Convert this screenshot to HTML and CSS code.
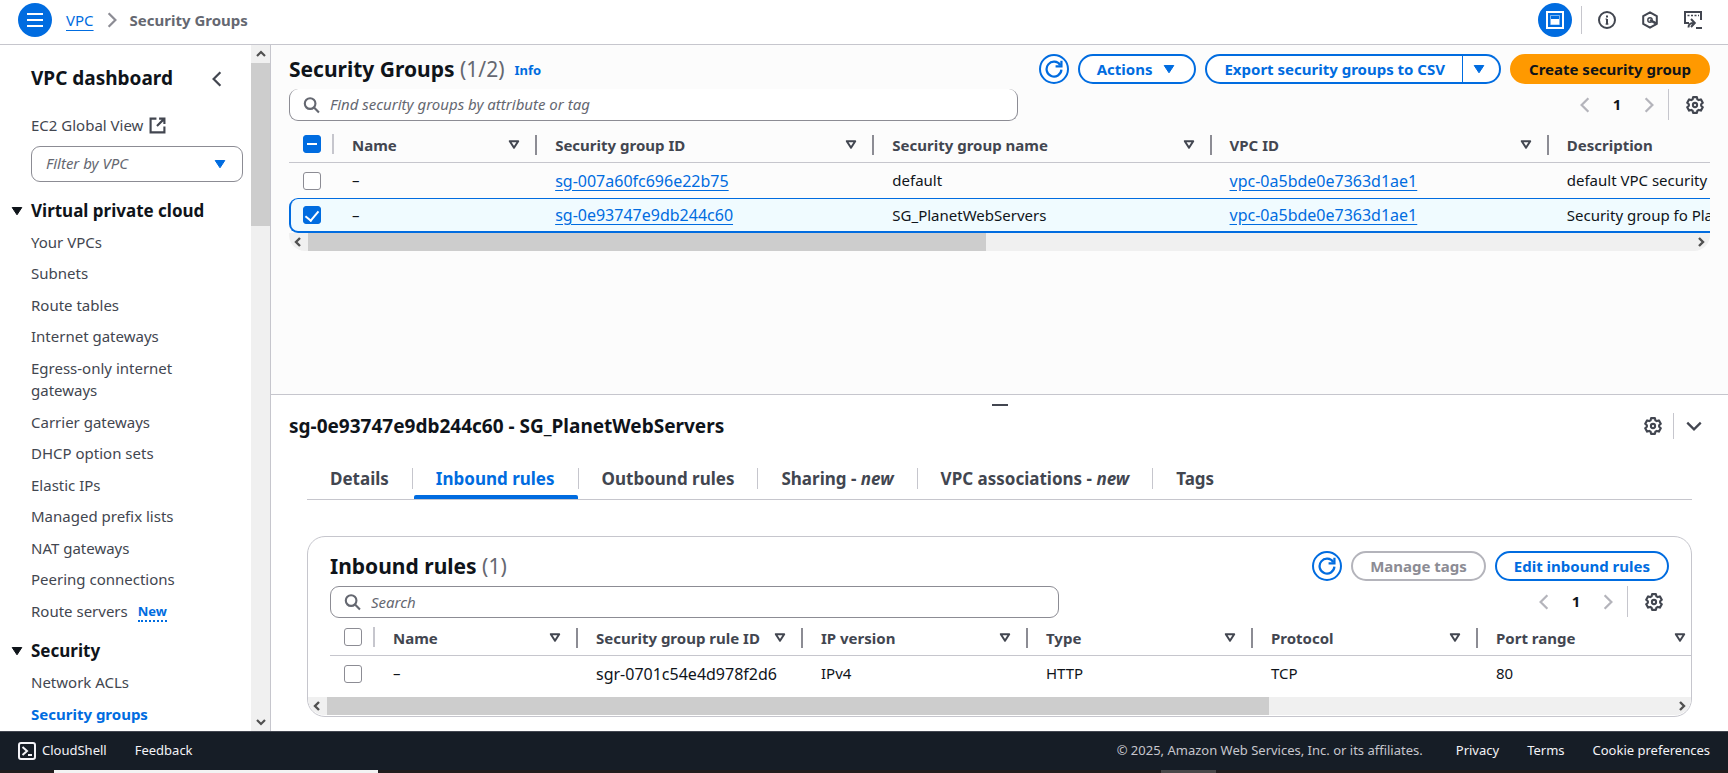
FILE: index.html
```html
<!DOCTYPE html>
<html lang="en">
<head>
<meta charset="utf-8">
<title>Security Groups | VPC Console</title>
<link rel="stylesheet" href="styles.css">
</head>
<body>
<svg class="sprite" aria-hidden="true">
  <symbol id="gear" viewBox="0 0 16 16"><path d="M6.3 1H9.7L10.1 2.9 11.37 3.63 13.21 3.03 14.91 5.97 13.47 7.27V8.73L14.91 10.03 13.21 12.97 11.37 12.37 10.1 13.1 9.7 15H6.3L5.9 13.1 4.63 12.37 2.79 12.97 1.09 10.03 2.53 8.73V7.27L1.09 5.97 2.79 3.03 4.63 3.63 5.9 2.9Z" fill="none" stroke="currentColor" stroke-width="1.9" stroke-linejoin="round"/><circle cx="8" cy="8" r="1.9" fill="none" stroke="currentColor" stroke-width="1.8"/></symbol>
  <symbol id="search" viewBox="0 0 16 16"><circle cx="6.7" cy="6.7" r="5" fill="none" stroke="currentColor" stroke-width="2"/><path d="M10.4 10.4 15 15" fill="none" stroke="currentColor" stroke-width="2"/></symbol>
  <symbol id="refresh" viewBox="0 0 16 16"><path d="M14.6 8.6A6.6 6.6 0 1 1 13.6 4.6" fill="none" stroke="currentColor" stroke-width="2"/><path d="M14.6 .6V5.6H9.4" fill="none" stroke="currentColor" stroke-width="2"/></symbol>
  <symbol id="left" viewBox="0 0 16 16"><path d="M11 2 5 8l6 6" fill="none" stroke="currentColor" stroke-width="2"/></symbol>
  <symbol id="right" viewBox="0 0 16 16"><path d="m5 2 6 6-6 6" fill="none" stroke="currentColor" stroke-width="2"/></symbol>
  <symbol id="down" viewBox="0 0 16 16"><path d="m2 5 6 6 6-6" fill="none" stroke="currentColor" stroke-width="2"/></symbol>
  <symbol id="caret" viewBox="0 0 16 16"><path d="M3.2 4.5h9.6L8 11.8Z" fill="currentColor" stroke="currentColor" stroke-linejoin="round"/></symbol>
  <symbol id="sort" viewBox="0 0 12 12"><path d="M1.8 2.2h8.4L6 8.8Z" fill="none" stroke="currentColor" stroke-width="2" stroke-linejoin="round"/></symbol>
  <symbol id="bar-left" viewBox="0 0 10 10"><path d="M7 1 3 5l4 4" fill="none" stroke="currentColor" stroke-width="2.4"/></symbol>
  <symbol id="bar-right" viewBox="0 0 10 10"><path d="m3 1 4 4-4 4" fill="none" stroke="currentColor" stroke-width="2.4"/></symbol>
  <symbol id="bar-up" viewBox="0 0 10 10"><path d="m1 7 4-4 4 4" fill="none" stroke="currentColor" stroke-width="2.2"/></symbol>
  <symbol id="bar-down" viewBox="0 0 10 10"><path d="m1 3 4 4 4-4" fill="none" stroke="currentColor" stroke-width="2.2"/></symbol>
</svg>

<header class="topbar">
  <button class="round" aria-label="Toggle navigation"><svg class="icon" viewBox="0 0 18 18"><path d="M1 3h16M1 9h16M1 15h16" stroke="currentColor" stroke-width="2"/></svg></button>
  <nav class="crumbs" aria-label="Breadcrumbs">
    <a href="#">VPC</a>
    <svg class="icon"><use href="#right"/></svg>
    <span>Security Groups</span>
  </nav>
  <div class="tools">
    <button class="round" aria-label="Split panel"><svg class="icon" viewBox="0 0 18 18"><path d="M1 1h16v16H1z" fill="none" stroke="currentColor" stroke-width="2"/><path d="M4.5 4.5h9v9h-9z" fill="none" stroke="currentColor" opacity=".5"/><path d="M5 8h8v5.500H5z" fill="currentColor"/></svg></button>
    <i class="rule"></i>
    <button class="plain" aria-label="Info"><svg class="icon" viewBox="0 0 18 18"><circle cx="9" cy="9" r="8" fill="none" stroke="currentColor" stroke-width="2"/><path d="M9 8v5.500M9 4.500v2" stroke="currentColor" stroke-width="2"/><path d="M7.500 8H9M7.500 13h3" stroke="currentColor"/></svg></button>
    <button class="plain" aria-label="Amazon Q"><svg class="icon" viewBox="0 0 18 18"><path d="m9 1.300 6.800 3.800v7.800L9 16.700 2.200 12.900V5.100Z" fill="none" stroke="currentColor" stroke-width="2" stroke-linejoin="round"/><path d="m9 9 6 3.400" stroke="currentColor" stroke-width="2.400"/><circle cx="9" cy="9" r="2.200" fill="none" stroke="currentColor" stroke-width="1.400"/></svg></button>
    <button class="plain" aria-label="CloudShell panel"><svg class="icon" viewBox="0 0 18 18"><path d="M5 12H1V1h16v8" fill="none" stroke="currentColor" stroke-width="2"/><path d="M3.500 4.500h2m1.500 0h2m1.500 0h2m1.500 0h1" stroke="currentColor" stroke-width="1.600"/><path d="M4.500 16.500c0-3.500 1.500-4.500 5.500-4.500M7 8l3.800 4L7 16" fill="none" stroke="currentColor" stroke-width="2"/><path d="M12 17h6" stroke="currentColor" stroke-width="2"/></svg></button>
  </div>
</header>

<div class="shell">
  <aside class="side">
    <div class="side-body">
      <div class="side-head"><h2>VPC dashboard</h2><button class="plain" aria-label="Close navigation"><svg class="icon"><use href="#left"/></svg></button></div>
      <a class="ext" href="#">EC2 Global View <svg class="icon" viewBox="0 0 16 16"><path d="M7 1.500H1.500v13h13V9M9.500 1.500h5v5M14 2 7.500 8.500" fill="none" stroke="currentColor" stroke-width="2"/></svg></a>
      <div class="filter">
        <select aria-label="Filter by VPC"><option>Filter by VPC</option></select>
        <svg class="icon"><use href="#caret"/></svg>
      </div>
      <h3><svg class="icon"><use href="#caret"/></svg>Virtual private cloud</h3>
      <ul>
        <li><a href="#">Your VPCs</a></li>
        <li><a href="#">Subnets</a></li>
        <li><a href="#">Route tables</a></li>
        <li><a href="#">Internet gateways</a></li>
        <li><a href="#">Egress-only internet gateways</a></li>
        <li><a href="#">Carrier gateways</a></li>
        <li><a href="#">DHCP option sets</a></li>
        <li><a href="#">Elastic IPs</a></li>
        <li><a href="#">Managed prefix lists</a></li>
        <li><a href="#">NAT gateways</a></li>
        <li><a href="#">Peering connections</a></li>
        <li><a href="#">Route servers</a><button class="new">New</button></li>
      </ul>
      <h3><svg class="icon"><use href="#caret"/></svg>Security</h3>
      <ul>
        <li><a href="#">Network ACLs</a></li>
        <li><a class="current" href="#">Security groups</a></li>
      </ul>
    </div>
    <div class="vbar"><svg><use href="#bar-up"/></svg><div class="track"><div class="thumb"></div></div><svg><use href="#bar-down"/></svg></div>
  </aside>

  <main>
    <section class="list">
      <div class="head">
        <h1>Security Groups <span>(1/2)</span></h1><a class="info" href="#">Info</a>
        <div class="actions">
          <button class="btn ring" aria-label="Refresh"><svg class="icon"><use href="#refresh"/></svg></button>
          <button class="btn">Actions <svg class="icon"><use href="#caret"/></svg></button>
          <div class="split"><button class="btn">Export security groups to CSV</button><button class="btn" aria-label="More export options"><svg class="icon"><use href="#caret"/></svg></button></div>
          <button class="btn primary">Create security group</button>
        </div>
      </div>
      <div class="bar">
        <label class="search cut"><svg class="icon"><use href="#search"/></svg><input type="text" aria-label="Find security groups" placeholder="Find security groups by attribute or tag"></label>
        <div class="pages">
          <button aria-label="Previous page" disabled><svg class="icon"><use href="#left"/></svg></button>
          <button class="num">1</button>
          <button aria-label="Next page" disabled><svg class="icon"><use href="#right"/></svg></button>
          <i class="rule"></i>
          <button aria-label="Preferences"><svg class="icon"><use href="#gear"/></svg></button>
        </div>
      </div>
      <div class="scroll">
        <table class="groups">
          <colgroup><col class="c-check"><col class="c-name"><col class="c-wide"><col class="c-wide"><col class="c-wide"><col class="c-wide"></colgroup>
          <thead><tr>
            <th><input class="mixed" type="checkbox" aria-label="Select all"></th>
            <th><div>Name<svg><use href="#sort"/></svg></div></th>
            <th><div>Security group ID<svg><use href="#sort"/></svg></div></th>
            <th><div>Security group name<svg><use href="#sort"/></svg></div></th>
            <th><div>VPC ID<svg><use href="#sort"/></svg></div></th>
            <th><div>Description<svg><use href="#sort"/></svg></div></th>
          </tr></thead>
          <tbody>
            <tr><td><input type="checkbox" aria-label="Select default"></td><td>–</td><td class="id"><a href="#">sg-007a60fc696e22b75</a></td><td>default</td><td class="id"><a href="#">vpc-0a5bde0e7363d1ae1</a></td><td>default VPC security</td></tr>
            <tr class="picked"><td><input type="checkbox" checked aria-label="Select SG_PlanetWebServers"></td><td>–</td><td class="id"><a href="#">sg-0e93747e9db244c60</a></td><td>SG_PlanetWebServers</td><td class="id"><a href="#">vpc-0a5bde0e7363d1ae1</a></td><td>Security group fo Pla</td></tr>
          </tbody>
        </table>
        <div class="hbar"><svg><use href="#bar-left"/></svg><div class="track"><div class="thumb half"></div></div><svg><use href="#bar-right"/></svg></div>
      </div>
    </section>

    <section class="panel">
      <div class="grip"></div>
      <div class="panel-head">
        <h2>sg-0e93747e9db244c60 - SG_PlanetWebServers</h2>
        <button class="plain" aria-label="Panel preferences"><svg class="icon"><use href="#gear"/></svg></button>
        <i class="rule"></i>
        <button class="plain" aria-label="Close panel"><svg class="icon"><use href="#down"/></svg></button>
      </div>
      <div class="panel-body">
        <div class="tabs" role="tablist">
          <button role="tab">Details</button>
          <button role="tab" aria-selected="true">Inbound rules</button>
          <button role="tab">Outbound rules</button>
          <button role="tab">Sharing - <em>new</em></button>
          <button role="tab">VPC associations - <em>new</em></button>
          <button role="tab">Tags</button>
        </div>
        <div class="card">
          <div class="head">
            <h1>Inbound rules <span>(1)</span></h1>
            <div class="actions">
              <button class="btn ring" aria-label="Refresh rules"><svg class="icon"><use href="#refresh"/></svg></button>
              <button class="btn" disabled>Manage tags</button>
              <button class="btn">Edit inbound rules</button>
            </div>
          </div>
          <div class="bar">
            <label class="search"><svg class="icon"><use href="#search"/></svg><input type="text" aria-label="Search rules" placeholder="Search"></label>
            <div class="pages">
              <button aria-label="Previous page" disabled><svg class="icon"><use href="#left"/></svg></button>
              <button class="num">1</button>
              <button aria-label="Next page" disabled><svg class="icon"><use href="#right"/></svg></button>
              <i class="rule"></i>
              <button aria-label="Preferences"><svg class="icon"><use href="#gear"/></svg></button>
            </div>
          </div>
          <div class="rules-wrap">
            <table class="rules">
              <colgroup><col class="c-check"><col class="c-name"><col class="c-rule"><col class="c-rule"><col class="c-rule"><col class="c-rule"><col class="c-rule"></colgroup>
              <thead><tr>
                <th><input type="checkbox" aria-label="Select all rules"></th>
                <th><div>Name<svg><use href="#sort"/></svg></div></th>
                <th><div>Security group rule ID<svg><use href="#sort"/></svg></div></th>
                <th><div>IP version<svg><use href="#sort"/></svg></div></th>
                <th><div>Type<svg><use href="#sort"/></svg></div></th>
                <th><div>Protocol<svg><use href="#sort"/></svg></div></th>
                <th><div>Port range<svg><use href="#sort"/></svg></div></th>
              </tr></thead>
              <tbody><tr><td><input type="checkbox" aria-label="Select rule"></td><td>–</td><td class="id">sgr-0701c54e4d978f2d6</td><td>IPv4</td><td>HTTP</td><td>TCP</td><td>80</td></tr></tbody>
            </table>
          </div>
          <div class="hbar"><svg><use href="#bar-left"/></svg><div class="track"><div class="thumb most"></div></div><svg><use href="#bar-right"/></svg></div>
        </div>
      </div>
    </section>
  </main>
</div>

<footer>
  <button><svg class="icon" viewBox="0 0 18 18"><rect x="1" y="1" width="16" height="16" rx="2" fill="none" stroke="currentColor" stroke-width="2"/><path d="m4.500 5 4.500 4-4.500 4M10 13h4" fill="none" stroke="currentColor" stroke-width="2"/></svg>CloudShell</button>
  <button>Feedback</button>
  <span>© 2025, Amazon Web Services, Inc. or its affiliates.</span>
  <a href="#">Privacy</a>
  <a href="#">Terms</a>
  <button>Cookie preferences</button>
</footer>
<div class="taskbar"><div class="task-light"></div><div class="task-dim"></div></div>
</body>
</html>
```

FILE: styles.css
```css
:root {
  --blue: #006ce0;
  --ink: #0f141a;
  --text: #424650;
  --muted: #656871;
  --line: #c6c6cd;
  --edge: #8c8c94;
}
* { box-sizing: border-box; }
body {
  margin: 0;
  height: 100vh;
  display: flex;
  flex-direction: column;
  overflow: hidden;
  background: #fff;
  color: var(--ink);
  font: 15px/1.5 "Noto Sans", "Open Sans", sans-serif;
}
h1, h2, h3, ul { margin: 0; padding: 0; }
ul { list-style: none; }
button, input, select { font: inherit; color: inherit; }
button { margin: 0; padding: 0; border: 0; background: none; cursor: pointer; white-space: nowrap; }
a { color: var(--blue); }
.sprite { display: none; }
.icon { width: 18px; height: 18px; flex: none; display: block; }
.rule { width: 1px; align-self: stretch; background: var(--line); }

/* top bar */
.topbar {
  display: flex;
  align-items: center;
  height: 45px;
  flex: none;
  padding: 0 26px 4px 18px;
  border-bottom: 1px solid var(--line);
}
.round {
  width: 34px;
  height: 34px;
  border-radius: 50%;
  background: var(--blue);
  color: #fff;
  display: grid;
  place-items: center;
}
.plain { color: var(--text); }
.crumbs { display: flex; align-items: center; gap: 9px; margin-left: 14px; color: var(--muted); font-weight: 700; }
.crumbs a { font-weight: 400; text-underline-offset: 4px; }
.crumbs .icon { color: var(--edge); }
.tools { margin-left: auto; display: flex; align-items: center; gap: 25px; }
.tools .round { margin-right: -16px; }
.tools .rule { margin: 3px -9px 3px 0; }

/* side navigation */
.shell { flex: 1; min-height: 0; display: flex; }
.side { width: 271px; flex: none; display: flex; border-right: 1px solid var(--line); }
.side-body { flex: 1; min-width: 0; overflow: hidden; padding: 20px 8px 0 31px; color: var(--text); }
.side-body a { color: inherit; text-decoration: none; }
.side-head { display: flex; justify-content: space-between; align-items: center; padding-right: 17px; color: var(--ink); }
.side-head h2 { font-size: 19px; line-height: 27px; }
.ext { display: flex; align-items: center; gap: 6px; margin-top: 22px; }
.ext .icon { width: 17px; height: 17px; }
.filter { display: grid; align-items: center; margin-top: 9px; color: var(--blue); }
.filter > * { grid-area: 1 / 1; }
.filter .icon { width: 16px; justify-self: end; margin-right: 15px; pointer-events: none; }
.filter select {
  appearance: none;
  height: 36px;
  padding: 0 14px;
  border: 1px solid var(--edge);
  border-radius: 9px;
  background: #fff;
  color: var(--muted);
  font-style: italic;
}
.side h3 { display: flex; align-items: center; gap: 6px; margin: 17px 0 8px -22px; font-size: 17px; line-height: 24px; color: var(--ink); }
.side h3 .icon { width: 16px; }
.side ul { display: flex; flex-direction: column; gap: 9px; }
.side li { display: flex; gap: 10px; }
.side li a { max-width: 170px; }
.side a.current { color: var(--blue); font-weight: 700; }
.new { color: var(--blue); font-size: 13px; line-height: 18px; font-weight: 700; border-bottom: 2px dotted var(--blue); align-self: end; }

/* scroll bars */
.vbar { width: 19px; display: flex; flex-direction: column; align-items: center; padding: 4px 0; background: #f0f0f0; color: #505050; }
.vbar svg, .hbar svg { width: 10px; height: 10px; flex: none; }
.vbar .track { flex: 1; width: 19px; padding: 4px 0; }
.vbar .thumb { height: 25%; background: #cdcdcd; }
.hbar { display: flex; align-items: center; gap: 5px; height: 18px; padding: 0 4px; background: #f0f0f0; color: #505050; border-radius: 0 0 16px 16px; }
.hbar .track { flex: 1; height: 18px; }
.hbar .thumb { height: 18px; background: #cdcdcd; }
.hbar .half { width: 49%; }
.hbar .most { width: 70%; }

/* list area */
main { flex: 1; min-width: 0; display: flex; flex-direction: column; }
.list { flex: 1; min-height: 0; background: #fcfcfc; padding: 9px 18px 0; }
.head { display: flex; align-items: center; }
h1 { font-size: 21px; line-height: 30px; }
h1 span { color: var(--muted); font-weight: 400; }
.info { margin: 4px 0 0 10px; font-size: 13px; font-weight: 700; text-decoration: none; }
.actions { margin-left: auto; display: flex; gap: 9px; }
.btn {
  height: 30px;
  padding: 0 17px;
  border: 2px solid var(--blue);
  border-radius: 15px;
  background: #fff;
  color: var(--blue);
  font-weight: 700;
  line-height: 20px;
  display: flex;
  align-items: center;
  gap: 9px;
}
.btn .icon { width: 16px; }
.btn:disabled { color: var(--edge); border-color: #b4b4bb; }
.ring { width: 30px; padding: 0; justify-content: center; }
.ring .icon { width: 18px; }
.primary { background: #ff9900; border-color: #ff9900; color: var(--ink); }
.split { display: flex; }
.split .btn:first-child { border-radius: 15px 0 0 15px; border-right-width: 1px; }
.split .btn:last-child { border-radius: 0 15px 15px 0; border-left: 0; padding: 0 12px 0 8px; }
.bar { display: flex; justify-content: space-between; margin-top: 5px; }
.search {
  width: 729px;
  height: 32px;
  display: flex;
  align-items: center;
  gap: 10px;
  padding: 0 13px;
  border: 1px solid var(--edge);
  border-radius: 9px;
  background: #fff;
  color: var(--muted);
}
.search.cut { border-top: 0; }
.search .icon { width: 17px; }
.search input { flex: 1; min-width: 0; border: 0; outline: 0; padding: 0; background: none; }
.search input::placeholder { color: var(--muted); font-style: italic; opacity: 1; }
.pages { display: flex; align-items: center; gap: 17px; height: 31px; padding-right: 6px; }
.pages button { color: var(--text); }
.pages button:disabled { color: #b4b4bb; }
.pages .icon { width: 18px; }
.pages .num { width: 12px; font-weight: 700; color: var(--ink); }
.pages .rule { margin: 0 0 0 -7px; }

/* tables */
.scroll { overflow: hidden; margin-top: 5px; }
table { table-layout: fixed; border-spacing: 0; border-collapse: separate; }
.groups { width: 1597px; }
.rules { width: 1373px; }
.c-check { width: 45px; }
.c-name { width: 203px; }
.c-wide { width: 337px; }
.c-rule { width: 225px; }
th, td { text-align: left; white-space: nowrap; padding: 0 14px 0 18px; }
td { height: 35px; }
th { height: 37px; padding-top: 2px; color: var(--text); border-bottom: 1px solid var(--line); font-weight: 700; }
th div { display: flex; justify-content: space-between; align-items: center; height: 20px; margin-right: -14px; padding-right: 14px; border-right: 2px solid var(--edge); }
th div svg { width: 12px; height: 12px; margin-right: 1px; }
th:first-child, td:first-child { padding: 0 0 0 14px; }
th:first-child { background: linear-gradient(var(--line), var(--line)) right center / 2px 20px no-repeat; }
.id { font-size: 16px; line-height: 22px; }
td a { text-underline-offset: 3px; }
.picked td { background: #f0fbff; border-top: 1px solid var(--blue); border-bottom: 2px solid var(--blue); }
.picked td:first-child { border-left: 2px solid var(--blue); border-radius: 9px 0 0 9px; padding-left: 12px; }
input[type="checkbox"] {
  appearance: none;
  display: grid;
  place-items: center;
  width: 18px;
  height: 18px;
  margin: 0;
  border: 1px solid var(--edge);
  border-radius: 3px;
  background: #fff;
}
input.mixed, input[type="checkbox"]:checked { background: var(--blue); border-color: var(--blue); }
input.mixed::before { content: ""; width: 10px; height: 2px; background: #fff; }
input[type="checkbox"]:checked::before { content: ""; width: 6px; height: 11px; margin-bottom: 2px; border: solid #fff; border-width: 0 2px 2px 0; transform: rotate(40deg); }

/* split panel */
.panel { border-top: 1px solid var(--line); padding: 9px 18px 14px; }
.grip { width: 16px; height: 2px; margin: 0 auto; background: var(--text); }
.panel-head { display: flex; align-items: center; gap: 11px; height: 26px; margin-top: 7px; padding-right: 7px; }
.panel-head h2 { flex: 1; font-size: 19px; }
.panel-body { padding: 0 18px; }
.tabs { display: flex; align-items: start; height: 61px; padding-top: 29px; border-bottom: 1px solid var(--line); }
.tabs button { position: relative; height: 21px; padding: 0 23px; font-size: 17px; line-height: 21px; font-weight: 700; color: var(--text); border-right: 1px solid var(--line); }
.tabs button:last-child { border: 0; }
.tabs [aria-selected] { color: var(--blue); }
.tabs [aria-selected]::after { content: ""; position: absolute; left: 1px; right: 0; bottom: -10px; height: 4px; border-radius: 2px 2px 0 0; background: var(--blue); }
.card { margin-top: 36px; border: 1px solid var(--line); border-radius: 18px; padding: 14px 0 1px; overflow: hidden; }
.card .head, .card .bar { padding: 0 22px; }
.rules-wrap { margin: 1px 0 6px 22px; overflow: hidden; }

/* footer */
footer { display: flex; align-items: center; gap: 28px; height: 39px; flex: none; padding: 0 18px; background: #161d26; border-top: 1px solid #424650; color: #f3f3f7; font-size: 13px; }
footer button { display: flex; align-items: center; gap: 6px; }
footer span { margin-left: auto; margin-right: 5px; color: #c6c6cd; }
footer a { color: inherit; text-decoration: none; }
.taskbar { display: grid; grid-template-columns: 54fr 324fr 783fr 55fr 512fr; height: 3px; flex: none; background: #211c1d; }
.task-light { grid-column: 2; background: #f3f3f3; }
.task-dim { grid-column: 4; background: #4a4849; }
```
